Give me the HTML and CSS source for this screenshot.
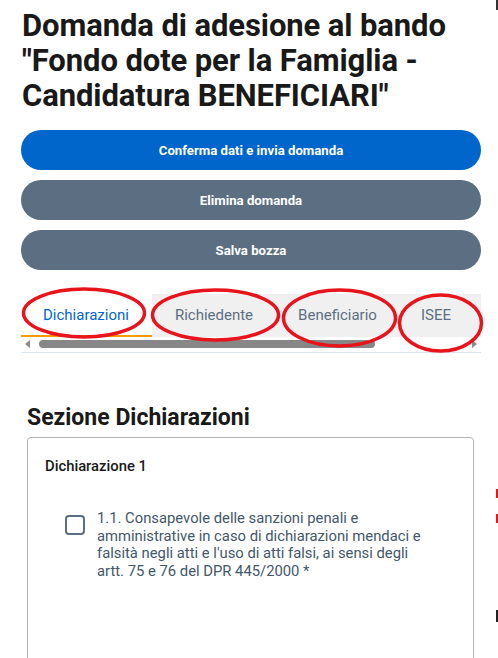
FILE: index.html
```html
<!DOCTYPE html>
<html lang="it">
<head>
<meta charset="utf-8">
<title>Domanda di adesione</title>
<link rel="stylesheet" href="styles.css">
</head>
<body>
<main class="page">
  <h1 class="title">Domanda di adesione al bando "Fondo dote per la Famiglia - Candidatura BENEFICIARI"</h1>

  <div class="actions">
    <button class="btn btn-primary">Conferma dati e invia domanda</button>
    <button class="btn btn-secondary">Elimina domanda</button>
    <button class="btn btn-secondary">Salva bozza</button>
  </div>

  <div class="tabs-wrap">
    <nav class="tabs">
      <a class="tab active">Dichiarazioni</a>
      <a class="tab">Richiedente</a>
      <a class="tab">Beneficiario</a>
      <a class="tab">ISEE</a>
    </nav>
    <div class="scrollbar">
      <span class="arrow arrow-left"></span>
      <span class="track"><span class="thumb"></span></span>
      <span class="arrow arrow-right"></span>
    </div>
    <div class="tabs-line"></div>

    <svg class="marks" width="498" height="80" viewBox="0 0 498 80">
      <ellipse cx="84" cy="27" rx="60.5" ry="24" />
      <ellipse cx="215.5" cy="29" rx="63" ry="25" />
      <ellipse cx="339.5" cy="32" rx="56" ry="28" />
      <ellipse cx="440.5" cy="37" rx="41" ry="28" />
    </svg>
  </div>

  <section class="section">
    <h2 class="section-title">Sezione Dichiarazioni</h2>
    <div class="card">
      <h3 class="card-title">Dichiarazione 1</h3>
      <label class="check">
        <span class="box"></span>
        <span class="check-text">1.1. Consapevole delle sanzioni penali e amministrative in caso di dichiarazioni mendaci e falsità negli atti e l'uso di atti falsi, ai sensi degli artt. 75 e 76 del DPR 445/2000 *</span>
      </label>
    </div>
  </section>

  <span class="edge edge-top"></span>
  <span class="edge edge-red1"></span>
  <span class="edge edge-red2"></span>
  <span class="edge edge-dark"></span>
</main>
</body>
</html>
```

FILE: styles.css
```css
* { box-sizing: border-box; }
html, body {
  margin: 0;
  padding: 0;
  background: #ffffff;
}
body {
  font-family: Roboto, "Liberation Sans", sans-serif;
  color: #1a1a1a;
  width: 498px;
  height: 658px;
  overflow: hidden;
}
.page {
  position: relative;
  padding: 0 17px 0 21px;
  height: 658px;
}
.title {
  margin: 0;
  padding: 8px 0 0 1px;
  font-size: 31px;
  line-height: 35px;
  font-weight: 700;
  color: #191919;
  letter-spacing: -0.1px;
}
.actions {
  display: flex;
  flex-direction: column;
  gap: 10px;
  margin-top: 17px;
}
.btn {
  display: block;
  width: 100%;
  height: 40px;
  border: 0;
  border-radius: 20px;
  font-family: inherit;
  font-size: 13.2px;
  font-weight: 700;
  color: #ffffff;
  padding: 0;
}
.btn-primary { background: #0066cc; }
.btn-secondary { background: #5c6f82; }

.tabs-wrap {
  position: relative;
  margin-top: 24px;
}
.tabs {
  display: flex;
  height: 43px;
  background: #f0f0f0;
}
.tab {
  display: flex;
  align-items: center;
  justify-content: center;
  font-size: 15px;
  color: #5c6f82;
  padding-bottom: 2px;
}
.tab:nth-child(1) { width: 131px; }
.tab:nth-child(2) { width: 124px; }
.tab:nth-child(3) { width: 123px; }
.tab:nth-child(4) { width: 82px; justify-content: flex-start; padding-left: 22px; }
.tab.active {
  background: #ffffff;
  color: #0066cc;
  border-bottom: 2px solid #f59b00;
  padding-bottom: 0;
  padding-left: 22px;
  justify-content: flex-start;
}
.scrollbar {
  display: flex;
  align-items: center;
  height: 13px;
  padding: 0 4px;
}
.arrow {
  width: 0;
  height: 0;
  border-top: 4px solid transparent;
  border-bottom: 4px solid transparent;
}
.arrow-left { border-right: 5px solid #8c8c8c; }
.arrow-right { border-left: 5px solid #8c8c8c; }
.track {
  flex: 1;
  padding: 0 8px 0 9px;
}
.thumb {
  display: block;
  width: 336px;
  height: 8px;
  border-radius: 4px;
  background: #878787;
}
.tabs-line {
  height: 1px;
  background: #dce4ee;
  margin-top: 2px;
}
.marks {
  position: absolute;
  left: -21px;
  top: -8px;
  pointer-events: none;
}
.marks ellipse {
  fill: none;
  stroke: #e8141c;
  stroke-width: 3.5;
}

.section {
  margin-top: 51px;
  padding-left: 6px;
}
.section-title {
  margin: 0;
  font-size: 23px;
  line-height: 28px;
  font-weight: 700;
  color: #191919;
}
.card {
  margin-top: 5px;
  width: 447px;
  height: 260px;
  border: 1px solid #b4b4b4;
  border-radius: 4px;
  padding: 18px 20px 0 17px;
}
.card-title {
  margin: 0;
  font-size: 14.8px;
  line-height: 20px;
  font-weight: 500;
  color: #1a1a1a;
}
.check {
  display: flex;
  align-items: flex-start;
  gap: 12px;
  margin-top: 34px;
  padding-left: 20px;
}
.box {
  flex: none;
  width: 20px;
  height: 20px;
  border: 2px solid #5c6f82;
  border-radius: 4px;
  margin-top: 5px;
}
.check-text {
  width: 338px;
  font-size: 14.8px;
  line-height: 17.7px;
  color: #44576b;
}
.edge {
  position: absolute;
  right: 0;
  width: 2px;
}
.edge-top { top: 0; height: 10px; background: #333; }
.edge-red1 { top: 489px; height: 9px; background: #e8141c; }
.edge-red2 { top: 514px; height: 9px; background: #e8141c; }
.edge-dark { top: 610px; height: 12px; background: #222; }
```
